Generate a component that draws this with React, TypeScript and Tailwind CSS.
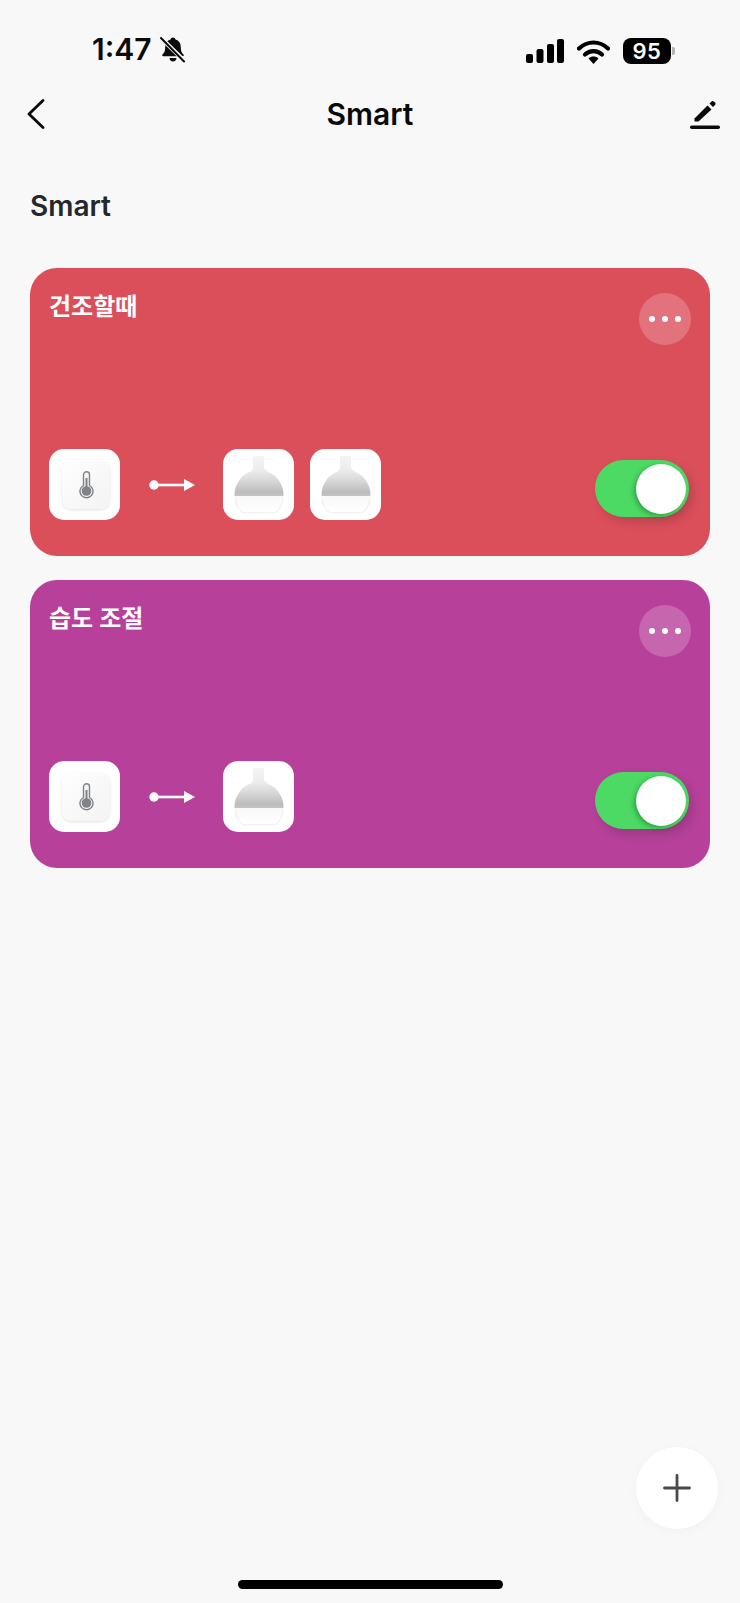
const FONT = "font-['Inter','Noto_Sans_CJK_KR',sans-serif]";

function BellSlash() {
  return (
    <svg width="26" height="27" viewBox="0 0 26 27">
      <path d="M13 1.500c1.300 0 2.300.8 2.500 1.900 3.500 1 5.300 3.900 5.300 7.800 0 3.800 1 5.500 2.700 7.200.6.700.2 1.800-.9 1.800H3.400c-1.100 0-1.500-1.100-.9-1.800 1.700-1.700 2.700-3.400 2.700-7.200 0-3.900 1.800-6.800 5.300-7.800.2-1.100 1.200-1.900 2.500-1.900z" fill="#0b0b0b" />
      <path d="M9.500 22h7c0 2-1.500 3.500-3.500 3.500S9.500 24 9.500 22z" fill="#0b0b0b" />
      <path d="M1 2l24 23.500" stroke="#f8f8f8" strokeWidth="4.200" />
      <path d="M1 2l23 23.500" stroke="#0b0b0b" strokeWidth="2" strokeLinecap="round" />
    </svg>
  );
}

function StatusIcons() {
  return (
    <div className="flex items-center">
      <svg width="38" height="24" viewBox="0 0 38 24" fill="#000">
        <rect x="0" y="15" width="7" height="9" rx="2" />
        <rect x="10.500" y="10" width="7" height="14" rx="2" />
        <rect x="21" y="5" width="7" height="19" rx="2" />
        <rect x="31" y="0" width="7" height="24" rx="2" />
      </svg>
      <svg className="ml-[13px]" width="33" height="25" viewBox="0 0 33 25">
        <path d="M2 9.500C10.500 1.500 22.500 1.500 31 9.500" fill="none" stroke="#000" strokeWidth="4.200" strokeLinecap="round" />
        <path d="M8 15.500c5-4.500 12-4.500 17 0" fill="none" stroke="#000" strokeWidth="4.200" strokeLinecap="round" />
        <path d="M11.500 19.500c3-2.600 7-2.600 10 0L16.500 25z" fill="#000" />
      </svg>
      <div className="ml-[13px] flex items-center">
        <div className="flex h-[26px] w-[48px] items-center justify-center rounded-[8px] bg-black text-[22px] leading-none font-semibold tracking-[0.5px] text-white">
          95
        </div>
        <div className="ml-[1px] h-[8px] w-[3px] rounded-r-[2px] bg-[#b4b4b4]" />
      </div>
    </div>
  );
}

function Thermometer() {
  return (
    <div className="flex h-[71px] w-[71px] items-center justify-center rounded-[15px] bg-white pl-[3px]">
      <div className="flex h-[48px] w-[48px] items-center justify-center rounded-[9px] bg-gradient-to-br from-[#ffffff] to-[#f3f3f4] shadow-[0_1px_3px_rgba(0,0,0,0.12)]">
        <svg width="15" height="28" viewBox="0 0 15 28">
          <path d="M4.500 14.500V3.800a3 3 0 0 1 6 0v10.700a6.500 6.500 0 1 1-6 0z" fill="#f4f4f5" stroke="#7f8388" strokeWidth="1.400" />
          <rect x="6.500" y="7" width="2" height="12" fill="#7f8388" />
          <circle cx="7.500" cy="20" r="4.800" fill="#7f8388" />
        </svg>
      </div>
    </div>
  );
}

function Bottle({ id }: { id: string }) {
  return (
    <div className="flex h-[71px] w-[71px] items-center justify-center rounded-[15px] bg-white">
      <svg width="71" height="71" viewBox="0 0 71 71">
        <defs>
          <linearGradient id={id + "g"} x1="0" y1="0" x2="0" y2="1">
            <stop offset="0" stopColor="#f4f4f4" />
            <stop offset="0.35" stopColor="#ececec" />
            <stop offset="0.6" stopColor="#d9d9d9" />
            <stop offset="0.9" stopColor="#bdbdbd" />
            <stop offset="1" stopColor="#c4c4c4" />
          </linearGradient>
          <linearGradient id={id + "b"} x1="0" y1="0" x2="0" y2="1">
            <stop offset="0" stopColor="#f8f8f8" />
            <stop offset="1" stopColor="#ffffff" />
          </linearGradient>
        </defs>
        <path d="M30 7h11v10c0 3 1.500 4.500 4 5.800A25 25 0 0 1 60.500 47h-49A25 25 0 0 1 27 22.800c2.500-1.300 3-2.800 3-5.800z" fill={`url(#${id}g)`} />
        <path d="M11.500 47h49c0 6-2 11-5.500 14.500-1.500 1.500-3.500 2.300-5.500 2.300h-27c-2 0-4-.8-5.500-2.300C13.500 58 11.500 53 11.500 47z" fill={`url(#${id}b)`} />
        <path d="M12 50c.6 4.500 2.500 8.500 5 11.500 1.500 1.500 3.500 2.300 5.500 2.300h27c2 0 4-.8 5.500-2.300 2.500-3 4.400-7 5-11.500" fill="none" stroke="#e6e8ee" strokeWidth="0.800" />
      </svg>
    </div>
  );
}

function Arrow() {
  return (
    <svg width="46" height="16" viewBox="0 0 46 16" className="shrink-0">
      <circle cx="5" cy="8" r="4.700" fill="#fff" />
      <path d="M5 8h32" stroke="#fff" strokeWidth="2.600" />
      <path d="M35 2L46 8 35 14z" fill="#fff" />
    </svg>
  );
}

function Toggle() {
  return (
    <div className="relative flex h-[57px] w-[94px] items-center justify-end rounded-full bg-[#4cd964] pr-[3px] shadow-[4px_5px_8px_rgba(60,30,40,0.22)]">
      <div className="h-[50px] w-[50px] rounded-full bg-white shadow-[-2px_2px_5px_rgba(0,60,20,0.35)]" />
    </div>
  );
}

function SmartCard({ title, color, devices, id }: { title: string; color: string; devices: number; id: string }) {
  return (
    <div className={`${color} h-[288px] rounded-[27px] pt-[25px] pr-[19px] pb-[37px] pl-[19px]`}>
      <div className="flex h-[52px] items-start justify-between">
        <div className="pt-[1px] text-[24px] leading-[26px] font-semibold text-white">{title}</div>
        <div className="flex h-[52px] w-[52px] items-center justify-center gap-[7px] rounded-full bg-white/20">
          <span className="h-[6px] w-[6px] rounded-full bg-white" />
          <span className="h-[6px] w-[6px] rounded-full bg-white" />
          <span className="h-[6px] w-[6px] rounded-full bg-white" />
        </div>
      </div>
      <div className="mt-[104px] flex items-center justify-between">
        <div className="flex items-center">
          <Thermometer />
          <div className="mr-[28px] ml-[29px]">
            <Arrow />
          </div>
          <div className="flex gap-[16px]">
            {Array.from({ length: devices }).map((_, i) => (
              <Bottle key={i} id={`${id}${i}`} />
            ))}
          </div>
        </div>
        <div className="mt-[8px] mr-[2px]">
          <Toggle />
        </div>
      </div>
    </div>
  );
}

export default function App() {
  return (
    <div className={`${FONT} relative flex h-[1603px] w-[740px] flex-col overflow-hidden bg-[#f8f8f8]`}>
      {/* Status bar */}
      <div className="flex h-[64px] items-end justify-between pr-[65px] pl-[92px]">
        <div className="flex items-center gap-[8px]">
          <span className="text-[30px] leading-[30px] font-semibold text-[#0b0b0b]">1:47</span>
          <BellSlash />
        </div>
        <StatusIcons />
      </div>

      {/* Nav */}
      <div className="mt-[31px] grid h-[38px] grid-cols-3 items-center px-[20px]">
        <svg className="ml-[7px]" width="18" height="30" viewBox="0 0 18 30">
          <path d="M16 1.500L2 15l14 13.500" fill="none" stroke="#0a0a0a" strokeWidth="2.800" strokeLinecap="round" strokeLinejoin="round" />
        </svg>
        <div className="text-center text-[30px] leading-[38px] font-semibold text-[#0a0a0a]">Smart</div>
        <svg className="justify-self-end" width="30" height="30" viewBox="0 0 30 30">
          <path d="M4.500 19.500L17.500 6.500l4 4L8.500 22.500H4.500z" fill="#0a0a0a" />
          <path d="M19.500 4.500l2-2c.8-.8 1.800-.8 2.500 0l1 1c.8.800.8 1.800 0 2.500l-2 2z" fill="#0a0a0a" />
          <rect x="0" y="26.500" width="30" height="3.500" rx="1.750" fill="#0a0a0a" />
        </svg>
      </div>

      <div className="mt-[56px] pl-[30px] text-[28px] leading-[34px] font-semibold text-[#24272c]">Smart</div>

      {/* Cards */}
      <div className="mt-[45px] flex flex-col gap-[24px] px-[30px]">
        <SmartCard title="건조할때" color="bg-[#db4f5a]" devices={2} id="a" />
        <SmartCard title="습도 조절" color="bg-[#b7409b]" devices={1} id="b" />
      </div>

      {/* Add button */}
      <div className="absolute top-[1447px] left-[636px] flex h-[82px] w-[82px] items-center justify-center rounded-full bg-white shadow-[0_2px_12px_rgba(0,0,0,0.03)]">
        <svg width="28" height="28" viewBox="0 0 28 28">
          <path d="M14 1.500v25M1.500 14h25" stroke="#4a4a4a" strokeWidth="2.800" strokeLinecap="round" />
        </svg>
      </div>

      {/* Home indicator */}
      <div className="mt-auto mb-[14px] flex justify-center">
        <div className="h-[9px] w-[265px] rounded-full bg-black" />
      </div>
    </div>
  );
}
